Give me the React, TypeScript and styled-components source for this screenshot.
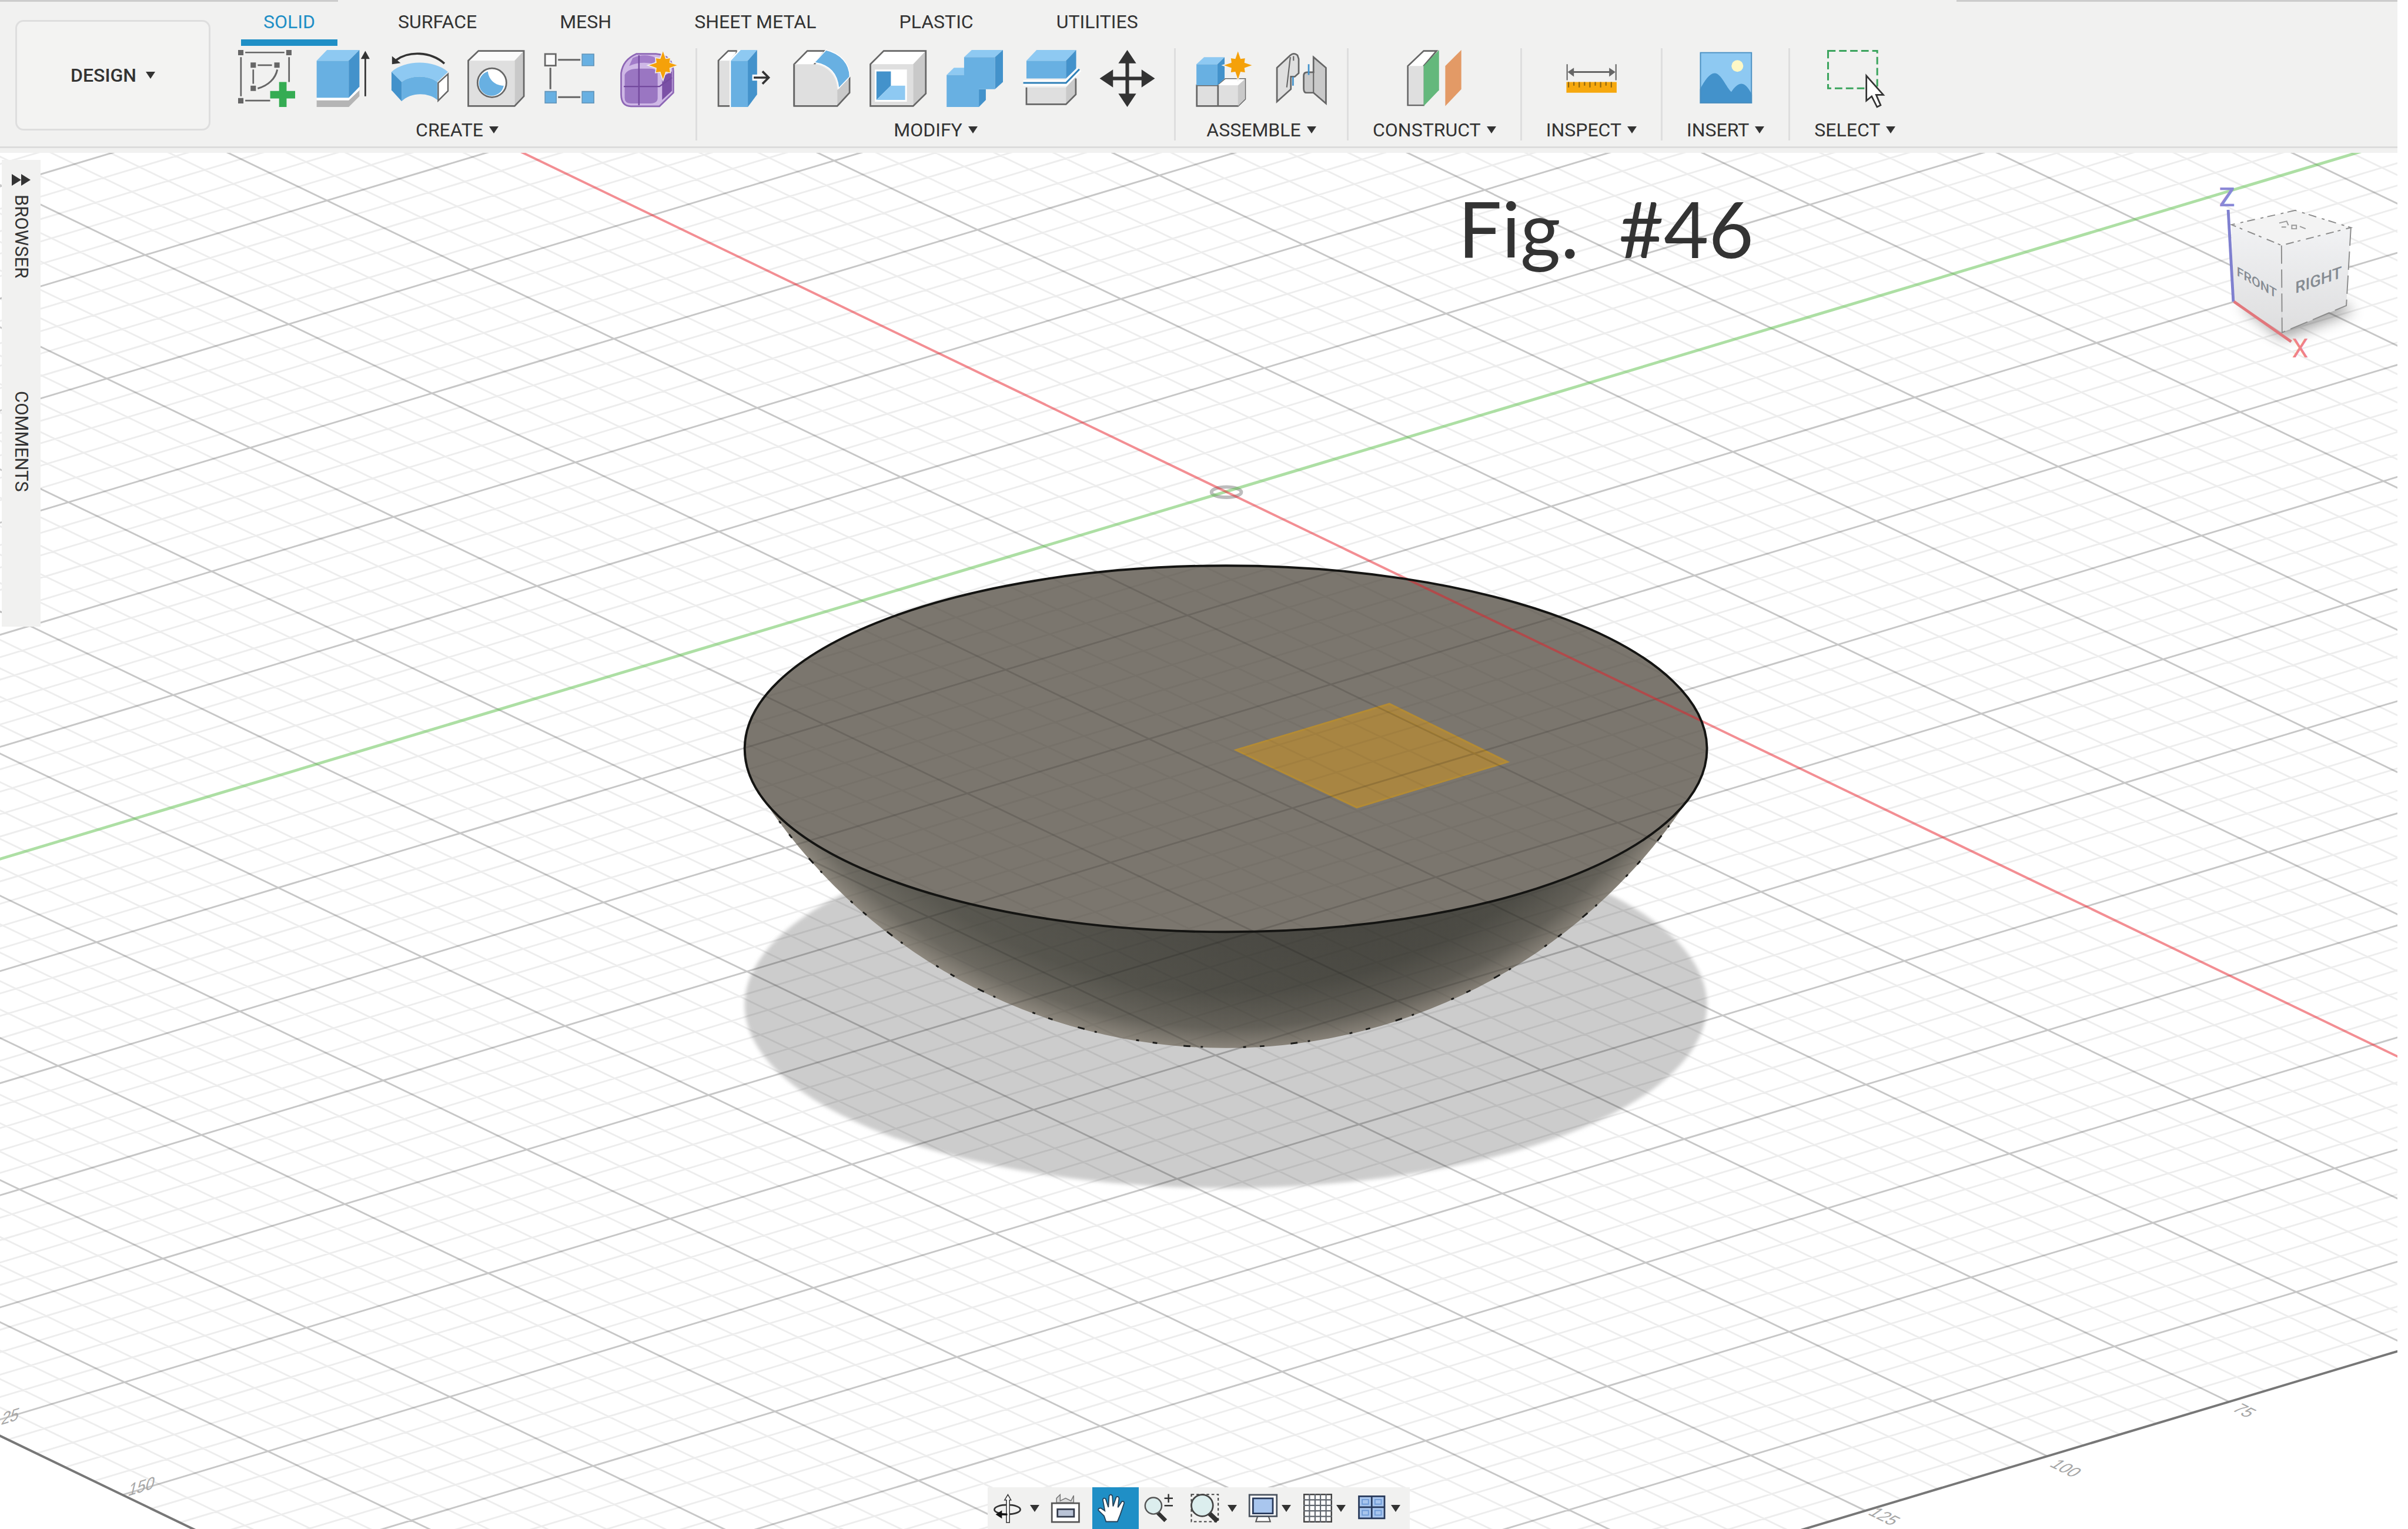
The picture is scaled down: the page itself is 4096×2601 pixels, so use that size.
import React from "react";
import styled, { createGlobalStyle, css } from "styled-components";

const ink = "#333333";
const line = "#666666";
const blue = "#68b0e2";
const blueLight = "#8ec9f2";
const blueDark = "#4392cb";
const accent = "#1f8fc6";

const GlobalStyle = createGlobalStyle`
  *, *::before, *::after { box-sizing: border-box; }
  html, body { margin: 0; background: #ffffff; }
  body { font-family: Roboto, "Liberation Sans", sans-serif; color: ${ink}; }
  button { font: inherit; color: inherit; background: none; border: 0; margin: 0; padding: 0; cursor: pointer; }
`;

const Shell = styled.div`
  display: flex;
  flex-direction: column;
  min-height: 100vh;
  padding-right: 18px;
`;

const Header = styled.header`
  display: flex;
  align-items: flex-start;
  flex: none;
  height: 260px;
  background: linear-gradient(#dcdcdc, #dcdcdc) 0 249px / 100% 3px no-repeat,
    linear-gradient(#cccccc, #cccccc) 0 0 / 575px 3px no-repeat,
    linear-gradient(#cccccc, #cccccc) 100% 0 / 750px 3px no-repeat, #f1f1f0;
`;

const Caret = styled.span`
  flex: none;
  width: 0;
  height: 0;
  border: solid transparent;
  border-width: 12px 8px 0;
  border-top-color: ${ink};
`;

const WorkspaceButton = styled.button`
  display: flex;
  flex: none;
  align-items: center;
  justify-content: center;
  gap: 16px;
  width: 332px;
  height: 188px;
  margin: 34px 14px 0 26px;
  border: 3px solid #dedede;
  border-radius: 14px;
  background: #f3f3f2;
  font-size: 32px;
  font-weight: 500;
`;

const Ribbon = styled.div`
  display: flex;
  flex-direction: column;
  flex: 1;
`;

const Tabs = styled.div`
  display: flex;
  gap: 65px;
  height: 82px;
  padding-left: 38px;
`;

const Tab = styled.button<{ $active?: boolean }>`
  height: 78px;
  padding: 6px 38px 0;
  border-bottom: 11px solid ${(p) => (p.$active ? accent : "transparent")};
  color: ${(p) => (p.$active ? accent : ink)};
  font-size: 32px;
  line-height: 60px;
`;

const Tools = styled.div`
  display: flex;
  height: 157px;
`;

const Group = styled.section`
  display: flex;
  flex-direction: column;
  align-items: center;
  gap: 21px;
  padding-top: 3px;
  border-right: 3px solid #dedede;
  &:last-child { border-right-color: transparent; }
`;

const Icons = styled.div`
  display: flex;
  gap: 33px;
  padding: 0 31px 0 33px;
`;

const ToolButton = styled.button`
  display: block;
  width: 97px;
  height: 97px;
  svg { display: block; width: 97px; height: 97px; overflow: visible; }
`;

const GroupLabel = styled.button`
  display: flex;
  align-items: center;
  gap: 10px;
  padding: 0 41px;
  font-size: 32px;
  line-height: 36px;
`;

const Viewport = styled.main`
  position: relative;
  display: flex;
  flex: 1;
  flex-direction: column;
  justify-content: flex-end;
  align-items: center;
  overflow: hidden;
  background: #ffffff;
`;

const Scene = styled.svg`
  position: absolute;
  inset: 0;
  width: 100%;
  height: 100%;
`;

const Caption = styled.h1`
  position: absolute;
  top: 48px;
  left: 2480px;
  margin: 0;
  font: 400 132px/160px Lato, "Liberation Sans", sans-serif;
  white-space: pre;
`;

const SidePanel = styled.aside`
  position: absolute;
  top: 12px;
  left: 3px;
  display: flex;
  flex-direction: column;
  align-items: center;
  width: 66px;
  height: 794px;
  padding-top: 24px;
  background: #f1f1f0;
`;

const Expand = styled.button`
  display: flex;
  height: 20px;
  svg { display: block; width: 32px; height: 20px; }
`;

const SideTab = styled.button<{ $space: number }>`
  margin-top: ${(p) => p.$space}px;
  writing-mode: vertical-rl;
  font-size: 31px;
  line-height: 36px;
`;

const Cube = styled.svg`
  position: absolute;
  top: 13px;
  right: 0;
  width: 328px;
  height: 361px;
`;

const NavBar = styled.nav`
  position: relative;
  display: flex;
  height: 71px;
  padding-right: 4px;
  background: #f1f1f0;
`;

const NavButton = styled.button<{ $kind?: "wide" | "tight"; $active?: boolean }>`
  display: flex;
  align-items: center;
  gap: ${(p) => (p.$kind === "tight" ? 7 : 14)}px;
  width: ${(p) => (p.$kind === "wide" ? 99 : p.$kind === "tight" ? 93 : 79)}px;
  padding-left: 9px;
  ${(p) => p.$active && css`background: ${accent};`}
  svg { display: block; flex: none; width: 49px; height: 49px; overflow: visible; }
`;

const Star = ({ x, y }: { x: number; y: number }) => {
  const pts = Array.from({ length: 16 }, (_, i) => {
    const r = i % 2 ? 4.2 : i % 4 ? 6 : 8.6;
    const a = (i * Math.PI) / 8;
    return `${x + r * Math.sin(a)},${y - r * Math.cos(a)}`;
  }).join(" ");
  return <polygon points={pts} fill="#f5a10a" stroke="#f1f1f0" strokeWidth="0.5" />;
};

const Svg = ({ children, size = 32 }: { children: React.ReactNode; size?: number }) => (
  <svg viewBox={`0 0 ${size} ${size}`} fill="none" aria-hidden="true">{children}</svg>
);

const icons: Record<string, React.ReactNode> = {
  sketch: (
    <Svg>
      <path d="M4 1.4H26M1.6 4V26M28.6 4V18M4 28.4H18M11 8.5H19M8.5 11V19" stroke={line} strokeWidth="0.9" />
      <path d="M22 11C21 16 17 20 11 21.6" stroke={line} strokeWidth="1" />
      <path d="M0 0h3v3H0zM27 0h3v3h-3zM0 27h3v3H0zM7 7h3v3H7zM20.300 7h3v3h-3zM7 20h3v3H7z" fill={line} />
      <path d="M23 18h4.200v5H32v4.200h-4.800V32H23v-4.800h-5V23h5z" fill="#35ac53" />
    </Svg>
  ),
  extrude: (
    <Svg>
      <path d="M1.200 28H19.200L25.200 22V26L19.200 32H1.200z" fill="#b5b5b5" />
      <path d="M1.200 26.800H19.200L25.200 20.500V22.600L19.200 28.300H1.200z" fill="#fff" />
      <path d="M1.200 6H19.200V26.800H1.200z" fill={blue} />
      <path d="M1.200 6L7 0H25.200L19.200 6z" fill={blueLight} />
      <path d="M19.200 6L25.200 0V20.600L19.200 26.800z" fill={blueDark} />
      <path d="M28.500 4V26" stroke={ink} strokeWidth="0.9" />
      <path d="M28.500 0.500L31 5H26z" fill={ink} />
    </Svg>
  ),
  revolve: (
    <Svg>
      <path d="M0.300 12.300C8 5.400 24 5.400 32 12.300L26 18C21 14 11 14 6 18z" fill={blueLight} />
      <path d="M6 18C11 14 21 14 26 18V28C21 23.600 11 23.600 6 28.800z" fill={blue} />
      <path d="M0.300 12.300L6 18V28.800L0.300 22.500z" fill={blueDark} />
      <path d="M26.500 18.500L32 13.500V23L26.500 28.500z" fill="#fff" stroke={line} strokeWidth="0.8" />
      <path d="M30 7.600C22 0.600 10 0.600 3 5.600" stroke={ink} strokeWidth="1.200" />
      <path d="M0.600 8V3.500L5.400 7.300z" fill={ink} />
    </Svg>
  ),
  hole: (
    <Svg>
      <path d="M0.500 6L6.200 0.500H31.700L26.500 6z" fill="#fbfbfb" />
      <path d="M26.500 6L31.700 0.500V26L26.500 31.500z" fill="#c9c9c9" />
      <path d="M0.500 6H26.500V31.500H0.500z" fill="#dfdfdf" />
      <path d="M0.500 31.500V6L6.200 0.500H31.700V26L26.500 31.500z" stroke={line} strokeWidth="0.9" />
      <circle cx="13.800" cy="18.400" r="8.100" fill="#fff" stroke={line} strokeWidth="0.9" />
      <path d="M11.500 12A7 7 0 1 0 20.400 20C16 20 12 17 11.500 12z" fill={blue} />
    </Svg>
  ),
  pattern: (
    <Svg>
      <path d="M8 5.500H20.500M3.700 10V22M8 26.500H20.500" stroke={line} strokeWidth="1" />
      <path d="M0.700 2.300H6.700V8.800H0.700z" fill="#fafafa" stroke={line} strokeWidth="0.9" />
      <path d="M21.500 2.300h6.600v6.500h-6.600zM0.700 23.300h6.300v6.500H0.700zM21.500 23.300h6.600v6.500h-6.600z" fill={blue} stroke="#6294b8" strokeWidth="0.500" />
    </Svg>
  ),
  form: (
    <Svg>
      <path d="M9 2.200H20Q29.500 3 29.800 12V24L22 31.600H6Q0.600 31.600 0.500 25V13Q1.500 5.500 9 2.200z" fill="#cfb8e6" stroke="#8d66b5" strokeWidth="0.9" />
      <path d="M7 4.500Q14 1.500 20 4.500L19 8Q12 6 5 9z" fill="#a27cc9" />
      <path d="M2.500 14Q4 10.500 10 10.500H17Q21 10.500 21 14V27Q21 30 17 30H6Q2.500 30 2.500 27z" fill="#9a76c2" />
      <path d="M23.500 15L29 12V23L23.500 28z" fill="#7b50a6" />
      <path d="M10.500 3V31M2 20.500H22L29 15.500" stroke="#744a9e" strokeWidth="0.800" />
      <Star x={24} y={8.600} />
    </Svg>
  ),
  press: (
    <Svg>
      <path d="M1 31.500V6L6.500 0.500H11V31.500z" fill="#dfdfdf" stroke={line} strokeWidth="0.9" />
      <path d="M1.500 6L6.700 1H11L7 6z" fill="#fff" />
      <path d="M7.300 32V5.600L12.500 0H15V32z" fill="#fff" />
      <path d="M8 6H17.500V32H8z" fill={blue} />
      <path d="M8 6L13.500 0H22.700L17.500 6z" fill={blueLight} />
      <path d="M17.500 6L22.700 0V25L17.500 32z" fill={blueDark} />
      <path d="M20 13.800H25V17.200H20z" fill="#fff" />
      <path d="M20.800 15.500H29M25.700 12L29.200 15.500L25.700 19" stroke={ink} strokeWidth="1.200" />
    </Svg>
  ),
  fillet: (
    <Svg>
      <path d="M0.600 31.500V8L8 0.500H18L12 8z" fill="#fff" stroke={line} strokeWidth="0.9" />
      <path d="M0.600 8H12C20 9 24.500 15 24.800 22V31.500H0.600z" fill="#dfdfdf" />
      <path d="M24.800 22.500L31.700 15.500V24L24.800 31.500z" fill="#c9c9c9" />
      <path d="M0.600 8V31.500H24.800L31.700 24V15" stroke={line} strokeWidth="0.9" />
      <path d="M12 7L18.500 0C27 2 31.800 8 31.800 15L25.600 21.500C25 14 21 8.500 12 7z" fill={blue} stroke="#fff" strokeWidth="0.500" />
    </Svg>
  ),
  shell: (
    <Svg>
      <path d="M0.500 8L8 0.500H31.600L24.500 8z" fill="#fff" />
      <path d="M24.500 8L31.600 0.500V24.500L24.500 31.500z" fill="#c9c9c9" />
      <path d="M0.500 8H24.500V31.500H0.500z" fill="#dfdfdf" />
      <path d="M0.500 31.500V8L8 0.500H31.600V24.500L24.500 31.500z" stroke={line} strokeWidth="0.9" />
      <path d="M3 11H21V29H3z" fill="#fff" />
      <path d="M3.900 12H12V20L3.900 28z" fill={blueDark} />
      <path d="M3.900 28L12 20H20V28z" fill={blueLight} />
    </Svg>
  ),
  combine: (
    <Svg>
      <path d="M10.200 4L14.500 0H32L27.500 4z" fill={blueLight} />
      <path d="M27.500 4L32 0V18L27.500 22z" fill={blueDark} />
      <path d="M0.400 14L4.500 10H12V14z" fill={blueLight} />
      <path d="M18.500 22H22.400V28L18.500 32z" fill={blueDark} />
      <path d="M10.200 4H27.500V22H18.500V32H0.400V14H10.200z" fill={blue} />
    </Svg>
  ),
  split: (
    <Svg>
      <path d="M2.300 30.500V21H24.500V30.500z" fill="#dfdfdf" />
      <path d="M24.500 21L30 15V25L24.500 30.500z" fill="#c9c9c9" />
      <path d="M2.300 21V30.500H24.500L30 25V16" stroke={line} strokeWidth="0.9" />
      <path d="M2.300 6H24.500V16H2.300z" fill={blue} />
      <path d="M2.300 6L8 0H30.200L24.500 6z" fill={blueLight} />
      <path d="M24.500 6L30.200 0V10.500L24.500 16z" fill={blueDark} />
      <path d="M0.500 18.500H24.500L32 10.800" stroke="#fff" strokeWidth="3" />
      <path d="M0.500 18.500H24.500L32 10.800" stroke="#2f80b7" strokeWidth="1" />
    </Svg>
  ),
  move: (
    <Svg>
      <path d="M16 4V28M4 16H28" stroke={ink} strokeWidth="2" />
      <path d="M16 0L21 7.500H11zM16 32L11 24.500H21zM0.500 16L8 11V21zM31.500 16L24 11V21z" fill={ink} />
    </Svg>
  ),
  component: (
    <Svg>
      <path d="M0.900 19.800V31.500H24L28 27.500V16.300H17L12.800 19.800z" fill="#dfdfdf" stroke={line} strokeWidth="0.9" />
      <path d="M12.800 19.800L17 16.300H28L24 19.800z" fill="#fff" />
      <path d="M24 20L28 16.300V27.500L24 31.500z" fill="#c9c9c9" />
      <path d="M12.800 20V31.500" stroke={line} strokeWidth="0.9" />
      <path d="M0.700 8H12.500V19.800H0.700z" fill={blue} />
      <path d="M0.700 8L5 4H16.500L12.500 8z" fill={blueLight} />
      <path d="M12.500 8L16.500 4V16L12.500 19.800z" fill={blueDark} />
      <Star x={24} y={8.600} />
    </Svg>
  ),
  joint: (
    <Svg>
      <path d="M3 10L10.500 3Q12.500 1.200 14.500 3L15.200 5V13L13 15H10.800V22L3 29z" fill="#dfdfdf" stroke={line} strokeWidth="0.9" />
      <path d="M10.500 4L8.500 21M12.300 3.500V6" stroke={line} strokeWidth="0.7" />
      <path d="M23.500 4L30.500 10V30L23.500 24H19.500Q18 24 18 21.500V14.500Q18 12.500 20 12.500H23.500z" fill="#c9c9c9" stroke={line} strokeWidth="0.9" />
      <path d="M23.500 12V24" stroke={line} strokeWidth="0.7" />
      <path d="M12 15V20M20.800 8V14" stroke={blueDark} strokeWidth="0.9" />
    </Svg>
  ),
  plane: (
    <Svg>
      <path d="M0.900 31V9L9.800 0.500H17L9.800 9V31z" fill="#fff" stroke={line} strokeWidth="0.9" />
      <path d="M1.300 9H9.800V30.600H1.300z" fill="#dfdfdf" />
      <path d="M9.800 9L18.400 0V22.500L9.800 31.500z" fill="#64b87c" />
      <path d="M21.900 9L30.900 0V22L21.900 31.500z" fill="#e39a66" />
    </Svg>
  ),
  measure: (
    <Svg>
      <path d="M2.200 8V17M29.600 8V17" stroke={line} strokeWidth="0.7" />
      <path d="M4 12.400H28" stroke={line} strokeWidth="1" />
      <path d="M2.500 12.400L6 10V15zM29.300 12.400L25.800 10V15z" fill={line} />
      <path d="M1.800 18H30V24H1.800z" fill="#f6a80e" />
      <path d="M3 18v3M6 18v2M9 18v3M12 18v2M15 18v3M18 18v2M21 18v3M24 18v2M27 18v3" stroke="#8c6410" strokeWidth="0.7" />
    </Svg>
  ),
  image: (
    <Svg>
      <path d="M1.200 1.200H30.400V30H1.200z" fill={blueLight} />
      <circle cx="22.200" cy="9" r="3.300" fill="#fdf8c6" />
      <path d="M1.200 22C4 17 6.500 13 9.500 13C13 13 16 21 18.800 23.500C20.500 21 22.500 19 24.500 19C27 19 29 22.500 30.400 25V30H1.200z" fill={blueDark} />
      <path d="M1.500 1.500H30.100V29.700H1.500z" stroke="#4a8fc0" strokeWidth="0.600" />
    </Svg>
  ),
  select: (
    <Svg>
      <path d="M0.500 0.500H28.100V21.500H0.500z" stroke="#3ba45d" strokeWidth="1" strokeDasharray="4.200 2" />
      <path d="M22 14.500V28.500L25 26L28 32L30 31L27.500 25.200H31.500z" fill="#fff" stroke={ink} strokeWidth="0.9" />
    </Svg>
  ),
  orbit: (
    <Svg size={16}>
      <ellipse cx="8" cy="8.800" rx="7.200" ry="2.600" stroke={ink} strokeWidth="0.9" />
      <path d="M7.500 16V3.500L6.500 3.500L8.300 0.500L10 3.500H9.200V16z" fill="#fff" stroke={ink} strokeWidth="0.500" />
      <path d="M1.500 11.500L5 9.200V13.800zM4 11H8V12H4z" fill="#111" />
    </Svg>
  ),
  look: (
    <Svg size={16}>
      <path d="M3 5V2.500L5 0.500V4L8 2.500L11 4L12.500 1V5z" fill="#ddd" stroke="#777" strokeWidth="0.500" />
      <path d="M0.400 5.300H15.500V15.700H0.400z" fill="#fff" stroke="#555" strokeWidth="0.900" />
      <path d="M3.500 8.600H12.700V12.800H3.500z" fill="#b9c3d6" stroke="#333a4a" strokeWidth="0.900" />
    </Svg>
  ),
  pan: (
    <Svg size={16}>
      <path d="M4.700 15.500L3.600 12.300L0.400 9.200Q0.300 7.900 1.800 8L4 9.500L2.900 3.200Q3.400 1.900 4.500 2.900L6 7.500L6.400 1.200Q7.400 -0.200 8.200 1.200L8.600 7L10.400 1.800Q11.700 1.200 11.900 2.600L11.300 7.600L13.500 4.300Q14.900 4 14.700 5.400L12.600 11.500L11 15.500z" fill="#fff" stroke="#24425a" strokeWidth="0.600" />
    </Svg>
  ),
  zoom: (
    <Svg size={16}>
      <path d="M7.500 10.500L12 15" stroke={ink} strokeWidth="2.200" />
      <circle cx="5.200" cy="6.700" r="4.600" fill="#dceeee" stroke="#555" strokeWidth="0.800" />
      <path d="M11.300 2.500H16M13.600 0.200V4.900M11.300 6.600H16" stroke={ink} strokeWidth="0.800" />
    </Svg>
  ),
  fit: (
    <Svg size={16}>
      <path d="M0.500 0.400H15.400V15.500H0.500z" stroke="#444" strokeWidth="0.700" strokeDasharray="1.500 1.300" />
      <path d="M10 10.500L15 15.200" stroke={ink} strokeWidth="2.600" />
      <circle cx="6.500" cy="6.500" r="6" fill="#dceeee" stroke="#444" strokeWidth="0.900" />
    </Svg>
  ),
  display: (
    <Svg size={16}>
      <path d="M5 12.500H11L12 15.500H4z" fill="#fff" stroke="#555" strokeWidth="0.700" />
      <path d="M0.400 0.600H15.600V12.500H0.400z" fill="#fff" stroke="#49525e" strokeWidth="0.900" />
      <path d="M2.400 2.600H13.400V11H2.400z" fill="#a9c6ee" stroke="#27395a" strokeWidth="0.900" />
    </Svg>
  ),
  grid: (
    <Svg size={16}>
      <path d="M0.400 0.400H15.600V15.600H0.400z" fill="#fff" stroke="#444" strokeWidth="0.800" />
      <path d="M3.400 0V16M6.500 0V16M9.500 0V16M12.600 0V16M0 3.400H16M0 6.500H16M0 9.500H16M0 12.600H16" stroke="#60666e" strokeWidth="0.700" />
    </Svg>
  ),
  views: (
    <Svg size={16}>
      <path d="M0.500 1.400H14.700V13.700H0.500z" fill="#a9c6ee" stroke="#27395a" strokeWidth="0.900" />
      <path d="M7.600 1.400V13.700M0.500 7.500H14.700" stroke="#27395a" strokeWidth="0.900" />
      <path d="M2.300 3.200H5.800V5.800H2.300zM9.400 3.200H12.900V5.800H9.400zM2.300 9.300H5.800V11.900H2.300zM9.400 9.300H12.900V11.900H9.400z" stroke="#6f9bd6" strokeWidth="0.600" />
    </Svg>
  ),
};

const groups: { name: string; tools: [string, string][] }[] = [
  {
    name: "CREATE",
    tools: [["sketch", "Create sketch"], ["extrude", "Extrude"], ["revolve", "Revolve"], ["hole", "Hole"], ["pattern", "Rectangular pattern"], ["form", "Create form"]],
  },
  {
    name: "MODIFY",
    tools: [["press", "Press pull"], ["fillet", "Fillet"], ["shell", "Shell"], ["combine", "Combine"], ["split", "Split body"], ["move", "Move"]],
  },
  { name: "ASSEMBLE", tools: [["component", "New component"], ["joint", "Joint"]] },
  { name: "CONSTRUCT", tools: [["plane", "Offset plane"]] },
  { name: "INSPECT", tools: [["measure", "Measure"]] },
  { name: "INSERT", tools: [["image", "Insert image"]] },
  { name: "SELECT", tools: [["select", "Select"]] },
];

const tabs = ["SOLID", "SURFACE", "MESH", "SHEET METAL", "PLASTIC", "UTILITIES"];

const navItems: { icon: string; label: string; kind?: "wide" | "tight"; active?: boolean }[] = [
  { icon: "orbit", label: "Orbit", kind: "wide" },
  { icon: "look", label: "Look at" },
  { icon: "pan", label: "Pan", active: true },
  { icon: "zoom", label: "Zoom" },
  { icon: "fit", label: "Fit", kind: "wide" },
  { icon: "display", label: "Display settings", kind: "tight" },
  { icon: "grid", label: "Grid and snaps", kind: "tight" },
  { icon: "views", label: "Viewports", kind: "tight" },
];

/* Ground plane: screen position of a grid point; one unit is a major cell. */
const project = (u: number, v: number): [number, number] => [
  2135.1 + 249.76 * u - 316.7 * v,
  856.2 + 120.41 * u + 94.9 * v,
];
const LIMIT = 10.8;
const STEPS = 54;

const segment = (a: [number, number], b: [number, number]) => `M${a[0]} ${a[1]}L${b[0]} ${b[1]}`;

let minorPath = "";
let majorPath = "";
for (let i = -STEPS; i <= STEPS; i++) {
  if (i === 0) continue;
  const t = i / 5;
  const d = segment(project(t, -LIMIT), project(t, LIMIT)) + segment(project(-LIMIT, t), project(LIMIT, t));
  if (i % 5 === 0) majorPath += d;
  else minorPath += d;
}
const edgePath = segment(project(LIMIT, -LIMIT), project(LIMIT, LIMIT)) + segment(project(-LIMIT, LIMIT), project(LIMIT, LIMIT));
const xAxis = segment(project(-LIMIT, 0), project(LIMIT, 0));
const yAxis = segment(project(0, -LIMIT), project(0, LIMIT));

const bowlPath = "M1320 1377A965 965 0 0 0 2950 1377z";

const Model = () => (
  <Scene viewBox="0 266 4176 2397" preserveAspectRatio="xMinYMin slice" role="img" aria-label="Half sphere body on the ground plane">
    <defs>
      <radialGradient id="bowl" gradientUnits="userSpaceOnUse" cx="2135" cy="858" r="965">
        <stop offset="0.780" stopColor="#4b4a44" />
        <stop offset="0.900" stopColor="#504f48" />
        <stop offset="0.965" stopColor="#66635b" />
        <stop offset="1" stopColor="#8c867c" />
      </radialGradient>
      <linearGradient id="side" x1="0" x2="1" y1="0" y2="0">
        <stop offset="0" stopColor="#8a867c" stopOpacity="0.250" />
        <stop offset="0.350" stopColor="#8a867c" stopOpacity="0.080" />
        <stop offset="0.650" stopColor="#000" stopOpacity="0.060" />
        <stop offset="1" stopColor="#8a867c" stopOpacity="0.200" />
      </linearGradient>
      <filter id="soft"><feGaussianBlur stdDeviation="3" /></filter>
      <clipPath id="body">
        <path d={bowlPath} />
        <ellipse cx="2135" cy="1304" rx="838" ry="319" />
      </clipPath>
      <g id="groundGrid" fill="none" stroke="#000" strokeWidth="3">
        <path d={minorPath} strokeOpacity="0.070" />
        <path d={majorPath} strokeOpacity="0.220" />
      </g>
    </defs>
    <ellipse cx="2135" cy="1750" rx="838" ry="319" fill="#cccccc" filter="url(#soft)" />
    <use href="#groundGrid" />
    <path d={bowlPath} fill="url(#bowl)" />
    <path d={bowlPath} fill="url(#side)" />
    <path d="M1357 1430A965 965 0 0 0 2913 1430" fill="none" stroke="#1c1c1a" strokeWidth="3" strokeDasharray="5 24 8 46 12 18 4 70" />
    <ellipse cx="2135" cy="1304" rx="838" ry="319" fill="#7b766e" />
    <path d="M2149 1306L2420 1224L2630 1327L2363 1408z" fill="#a88542" />
    <path d="M2153 1306L2420 1226L2625 1327L2363 1406z" fill="none" stroke="#b38b35" strokeWidth="3" />
    <path d="M2400 1230L2595 1325" fill="none" stroke="#b38b35" strokeWidth="3" opacity="0.500" />
    <g clipPath="url(#body)">
      <use href="#groundGrid" opacity="0.600" />
    </g>
    <g fill="none">
      <path d={edgePath} stroke="#777" strokeWidth="4" />
      <ellipse cx="2136" cy="857" rx="26" ry="9" stroke="#bdbdbd" strokeWidth="6" />
      <path d={yAxis} stroke="#5cc04a" strokeOpacity="0.500" strokeWidth="5" />
      <path d={xAxis} stroke="#e81e28" strokeOpacity="0.500" strokeWidth="4" />
      <ellipse cx="2135" cy="1304" rx="838" ry="319" stroke="#141412" strokeWidth="4" />
    </g>
    <g fill="#a6a6a6" fontFamily='"Liberation Sans", sans-serif' fontSize="28">
      <text transform="translate(3886 2456) rotate(26) skewX(-30)">75</text>
      <text transform="translate(3568 2553) rotate(26) skewX(-30)">100</text>
      <text transform="translate(3252 2637) rotate(26) skewX(-30)">125</text>
      <text transform="translate(222 2606) rotate(-17) skewX(-30)">150</text>
      <text transform="translate(1 2482) rotate(-17) skewX(-30)">25</text>
    </g>
  </Scene>
);

const ViewCube = () => (
  <Cube viewBox="0 0 336 370" role="img" aria-label="View cube">
    <defs>
      <filter id="cubeShadow" x="-30%" y="-60%" width="160%" height="220%"><feGaussianBlur stdDeviation="12" /></filter>
      <linearGradient id="cubeFace" x1="0" x2="0" y1="0" y2="1">
        <stop offset="0" stopColor="#f1f2f4" />
        <stop offset="1" stopColor="#dededf" />
      </linearGradient>
    </defs>
    <path d="M60 250L135 312L262 262L200 230z" fill="#000" opacity="0.350" filter="url(#cubeShadow)" />
    <path d="M158 87L47 112L134 148L255 117z" fill="#f3f3f3" />
    <path d="M47 112L134 148L135 300L50 245z" fill="url(#cubeFace)" />
    <path d="M134 148L255 117L247 253L135 300z" fill="url(#cubeFace)" />
    <path d="M158 87L47 112L134 148L255 117z" fill="none" stroke="#8c8c8c" strokeWidth="2" strokeDasharray="14 7 5 10" />
    <path d="M134 148L135 300L247 253L255 117" fill="none" stroke="#8c8c8c" strokeWidth="2" strokeDasharray="32 10" />
    <path d="M130 109L143 106L146 113M134 116H142M152 113H160V119H152zM166 115L176 119" fill="none" stroke="#999" strokeWidth="2" />
    <g fill="#858b92" fontFamily='Roboto, "Liberation Sans", sans-serif' fontWeight="500">
      <text transform="translate(56 200) skewY(30)" fontSize="22">FRONT</text>
      <text transform="translate(158 232) skewY(-19)" fontSize="28">RIGHT</text>
    </g>
    <path d="M41 86L50 246" stroke="#7f80cf" strokeWidth="5" />
    <path d="M51 246L151 316" stroke="#e2777c" strokeWidth="5" />
    <g fontFamily='Roboto, "Liberation Sans", sans-serif' fontSize="46">
      <text x="25" y="80" fill="#8a88d6" fontWeight="500">Z</text>
      <text x="152" y="343" fill="#f08287">X</text>
    </g>
  </Cube>
);

export default function App() {
  return (
    <>
      <GlobalStyle />
      <Shell>
        <Header>
          <WorkspaceButton>
            DESIGN
            <Caret />
          </WorkspaceButton>
          <Ribbon>
            <Tabs role="tablist">
              {tabs.map((tab, i) => (
                <Tab key={tab} role="tab" aria-selected={i === 0} $active={i === 0}>
                  {tab}
                </Tab>
              ))}
            </Tabs>
            <Tools>
              {groups.map((group) => (
                <Group key={group.name}>
                  <Icons>
                    {group.tools.map(([icon, label]) => (
                      <ToolButton key={icon} aria-label={label}>
                        {icons[icon]}
                      </ToolButton>
                    ))}
                  </Icons>
                  <GroupLabel>
                    {group.name}
                    <Caret />
                  </GroupLabel>
                </Group>
              ))}
            </Tools>
          </Ribbon>
        </Header>
        <Viewport>
          <Model />
          <Caption>{"Fig.  #46"}</Caption>
          <SidePanel>
            <Expand aria-label="Expand panel">
              <svg viewBox="0 0 32 20" aria-hidden="true">
                <path d="M0 0L16 10L0 20zM16 0L32 10L16 20z" fill={ink} />
              </svg>
            </Expand>
            <SideTab $space={15}>BROWSER</SideTab>
            <SideTab $space={192}>COMMENTS</SideTab>
          </SidePanel>
          <ViewCube />
          <NavBar aria-label="Navigation">
            {navItems.map((item) => (
              <NavButton key={item.icon} $kind={item.kind} $active={item.active} aria-label={item.label}>
                {icons[item.icon]}
                {item.kind && <Caret />}
              </NavButton>
            ))}
          </NavBar>
        </Viewport>
      </Shell>
    </>
  );
}
